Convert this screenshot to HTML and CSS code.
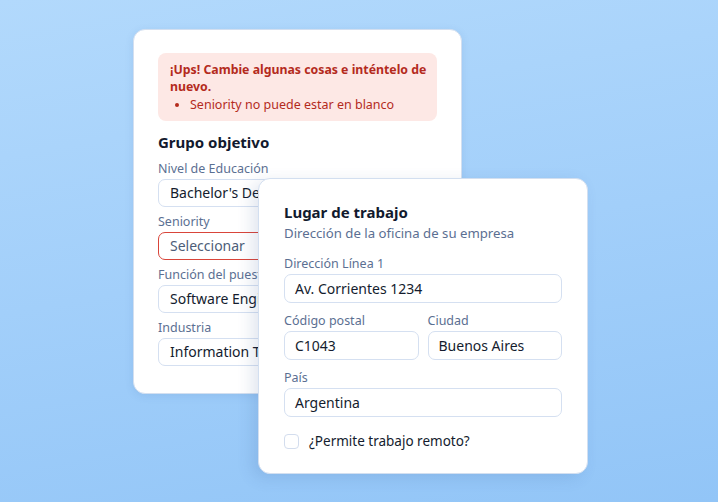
FILE: index.html
```html
<!DOCTYPE html>
<html lang="es">
<head>
<meta charset="utf-8">
<link rel="stylesheet" href="styles.css">
</head>
<body>
<div class="stage">
  <section class="card card-a">
    <div class="alert">
      <p class="alert-title">¡Ups! Cambie algunas cosas e inténtelo de nuevo.</p>
      <ul class="alert-list"><li>Seniority no puede estar en blanco</li></ul>
    </div>
    <h2 class="title">Grupo objetivo</h2>
    <div class="field">
      <label class="label">Nivel de Educación</label>
      <div class="input">Bachelor's Degree</div>
    </div>
    <div class="field">
      <label class="label">Seniority</label>
      <div class="input input-error placeholder">Seleccionar</div>
    </div>
    <div class="field">
      <label class="label">Función del puesto</label>
      <div class="input">Software Engineer</div>
    </div>
    <div class="field">
      <label class="label">Industria</label>
      <div class="input">Information Technology</div>
    </div>
  </section>

  <section class="card card-b">
    <h2 class="title">Lugar de trabajo</h2>
    <p class="subtitle">Dirección de la oficina de su empresa</p>
    <div class="field">
      <label class="label">Dirección Línea 1</label>
      <div class="input">Av. Corrientes 1234</div>
    </div>
    <div class="row">
      <div class="field">
        <label class="label">Código postal</label>
        <div class="input">C1043</div>
      </div>
      <div class="field">
        <label class="label">Ciudad</label>
        <div class="input">Buenos Aires</div>
      </div>
    </div>
    <div class="field">
      <label class="label">País</label>
      <div class="input">Argentina</div>
    </div>
    <div class="check">
      <span class="box"></span>
      <span class="check-label">¿Permite trabajo remoto?</span>
    </div>
  </section>
</div>
</body>
</html>
```

FILE: styles.css
```css
* { box-sizing: border-box; }
html, body { margin: 0; padding: 0; }
body {
  width: 718px;
  height: 502px;
  overflow: hidden;
  font-family: "Noto Sans", sans-serif;
  background: linear-gradient(170deg, #b2d9fc 0%, #a2cffa 50%, #92c5f7 100%);
}
.stage {
  position: relative;
  width: 718px;
  height: 502px;
}
.card {
  position: absolute;
  background: #fff;
  border: 1px solid #d3dff0;
  border-radius: 12px;
  box-shadow: 0 2px 8px rgba(40, 80, 140, 0.10);
}
.card-a {
  left: 133px;
  top: 29px;
  width: 329px;
  height: 365px;
  padding: 23px 24px 0 24px;
}
.card-b {
  left: 258px;
  top: 178px;
  width: 330px;
  height: 296px;
  padding: 23px 25px 0 25px;
  box-shadow: -6px 4px 16px rgba(40, 80, 140, 0.14);
}
.alert {
  background: #fde8e5;
  border-radius: 8px;
  padding: 8px 8px 8px 12px;
  color: #b42b1d;
  width: 279px;
}
.alert-title {
  margin: 0;
  font-weight: 700;
  font-size: 12.3px;
  line-height: 17px;
}
.alert-list {
  margin: 1px 0 0 0;
  padding: 0 0 0 20px;
  font-size: 12.5px;
  line-height: 17px;
}
.title {
  margin: 11px 0 0 0;
  font-size: 15px;
  line-height: 20px;
  font-weight: 700;
  color: #121a2e;
}
.card-b .title { margin-top: 0; }
.subtitle {
  margin: 2px 0 0 0;
  font-size: 13.2px;
  line-height: 18px;
  color: #5b6f92;
}
.label {
  display: block;
  font-size: 12.5px;
  line-height: 17px;
  color: #5b6f92;
}
.input {
  margin-top: 2px;
  border: 1px solid #d5e0f1;
  border-radius: 7px;
  font-size: 14px;
  color: #141c2e;
  white-space: nowrap;
  overflow: hidden;
  background: #fff;
}
.card-a .field { margin-top: 6px; }
.card-a .title + .field { margin-top: 8px; }
.card-a .input {
  width: 279px;
  height: 28px;
  line-height: 26px;
  padding: 0 11px;
}
.card-b .field { margin-top: 9px; }
.card-b .subtitle + .field { margin-top: 13px; }
.card-b .row .field { margin-top: 0; }
.card-b .row { margin-top: 9px; }
.card-b .input {
  height: 29px;
  line-height: 27px;
  padding: 0 10px;
}
.input-error { border-color: #d9453a; }
.placeholder { color: #4d5d78; }
.row {
  display: grid;
  grid-template-columns: 1fr 1fr;
  gap: 9px;
}
.check {
  margin-top: 15px;
  display: flex;
  align-items: center;
  gap: 10px;
}
.box {
  width: 15px;
  height: 15px;
  border: 1px solid #d3ddee;
  border-radius: 4px;
  background: #fff;
}
.check-label {
  font-size: 13.5px;
  line-height: 19px;
  color: #141c2e;
}
```
